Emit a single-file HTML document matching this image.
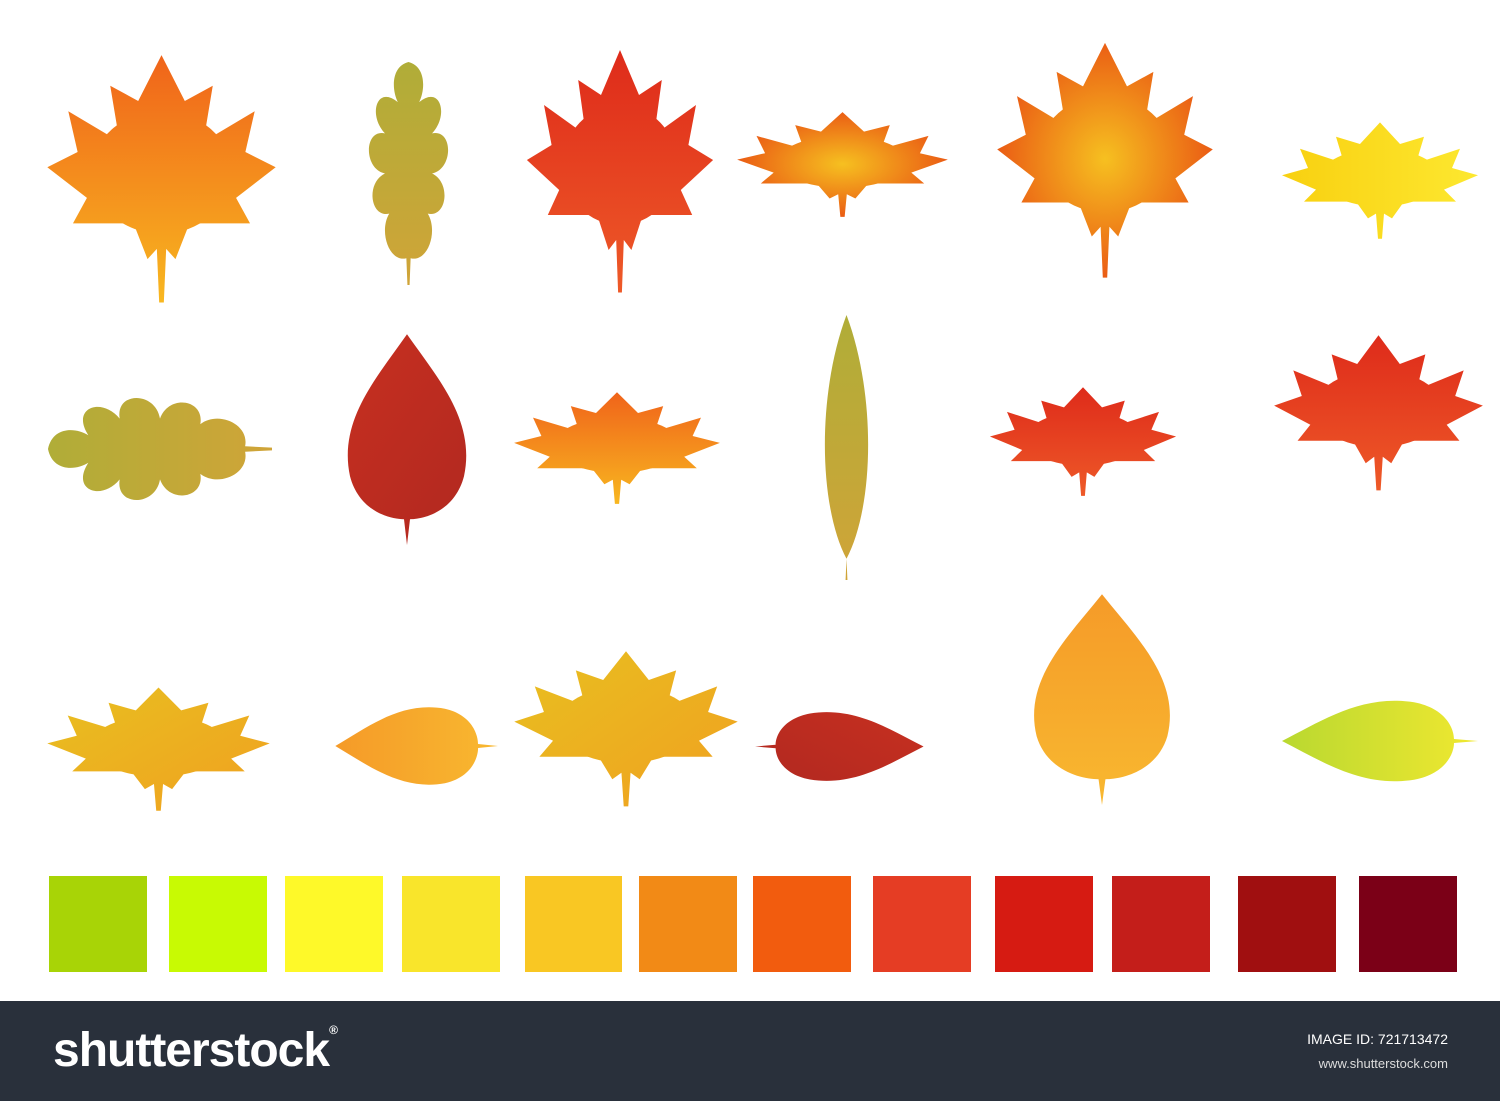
<!DOCTYPE html>
<html><head><meta charset="utf-8"><style>
html,body{margin:0;padding:0;background:#fff;width:1500px;height:1101px;overflow:hidden;position:relative;font-family:"Liberation Sans",sans-serif}
.sw{position:absolute;top:876px;height:96px}
#foot{position:absolute;left:0;top:1001px;width:1500px;height:100px;background:#29303b;color:#fff}
</style></head><body>
<svg width="1500" height="1000" style="position:absolute;left:0;top:0">
<defs>
<g id="maple"><path d="M50,2 L60,20 L72,14 L68,36 L90,24 L86,40 L99,46 L82,58 L88,68 L62,68 L56,82 L52,78 L51,99 L49,99 L48,78 L44,82 L38,68 L12,68 L18,58 L1,46 L14,40 L10,24 L32,36 L28,14 L40,20 Z"/><ellipse cx="50" cy="48" rx="30" ry="24"/></g>
<path id="oak" d="M50,0 C66,2 66,12 60,18 C80,10 88,24 72,32 C92,30 92,48 72,50 C90,54 86,70 68,68 C78,76 68,90 52,88 L51,100 L49,100 L48,88 C32,90 22,76 32,68 C14,70 10,54 28,50 C8,48 8,30 28,32 C12,24 20,10 40,18 C34,12 34,2 50,0Z"/>
<path id="oval" d="M50,0 C82,30 80,72 50,92 L51,100 L49,100 L50,92 C20,72 18,30 50,0Z"/>
<path id="heart" d="M50,2 C70,22 96,42 88,68 C82,84 62,88 52,88 L50,100 L48,88 C38,88 18,84 12,68 C4,42 30,22 50,2Z"/>
<linearGradient id="gO" gradientUnits="userSpaceOnUse" x1="0" y1="0" x2="0" y2="100"><stop offset="0" stop-color="#f0621a"/><stop offset="1" stop-color="#f8b820"/></linearGradient>
<radialGradient id="gO2" gradientUnits="userSpaceOnUse" cx="50" cy="50" r="50"><stop offset="0" stop-color="#f6c020"/><stop offset="1" stop-color="#ea5a14"/></radialGradient>
<linearGradient id="gR" gradientUnits="userSpaceOnUse" x1="0" y1="0" x2="0" y2="100"><stop offset="0" stop-color="#de2a1a"/><stop offset="1" stop-color="#ee5a28"/></linearGradient>
<linearGradient id="gY" gradientUnits="userSpaceOnUse" x1="0" y1="0" x2="100" y2="0"><stop offset="0" stop-color="#f8d010"/><stop offset="1" stop-color="#fde830"/></linearGradient>
<linearGradient id="gOl" gradientUnits="userSpaceOnUse" x1="0" y1="0" x2="0" y2="100"><stop offset="0" stop-color="#b0ad38"/><stop offset="1" stop-color="#d0a438"/></linearGradient>
<linearGradient id="gB" gradientUnits="userSpaceOnUse" x1="0" y1="0" x2="100" y2="100"><stop offset="0" stop-color="#c83020"/><stop offset="1" stop-color="#b02820"/></linearGradient>
<linearGradient id="gYO" gradientUnits="userSpaceOnUse" x1="0" y1="0" x2="100" y2="100"><stop offset="0" stop-color="#e8c020"/><stop offset="1" stop-color="#f0a020"/></linearGradient>
<linearGradient id="gGY" gradientUnits="userSpaceOnUse" x1="0" y1="0" x2="0" y2="100"><stop offset="0" stop-color="#b8d830"/><stop offset="1" stop-color="#f0e830"/></linearGradient>
<linearGradient id="gHO" gradientUnits="userSpaceOnUse" x1="0" y1="0" x2="0" y2="100"><stop offset="0" stop-color="#f59a28"/><stop offset="1" stop-color="#f8b830"/></linearGradient>
</defs>
<svg x="45" y="50" width="233" height="255" viewBox="0 0 100 100" preserveAspectRatio="none"><use href="#maple" fill="url(#gO)"/></svg>
<svg x="355" y="62" width="107" height="223" viewBox="0 0 100 100" preserveAspectRatio="none"><use href="#oak" fill="url(#gOl)"/></svg>
<svg x="525" y="45" width="190" height="250" viewBox="0 0 100 100" preserveAspectRatio="none"><use href="#maple" fill="url(#gR)"/></svg>
<svg x="735" y="110" width="215" height="108" viewBox="0 0 100 100" preserveAspectRatio="none"><use href="#maple" fill="url(#gO2)"/></svg>
<svg x="995" y="38" width="220" height="242" viewBox="0 0 100 100" preserveAspectRatio="none"><use href="#maple" fill="url(#gO2)"/></svg>
<svg x="1280" y="120" width="200" height="120" viewBox="0 0 100 100" preserveAspectRatio="none"><use href="#maple" fill="url(#gY)"/></svg>
<svg x="48" y="380" width="224" height="138" viewBox="0 0 100 100" preserveAspectRatio="none"><g transform="rotate(-90 50 50)"><use href="#oak" fill="url(#gOl)"/></g></svg>
<svg x="332" y="330" width="150" height="215" viewBox="0 0 100 100" preserveAspectRatio="none"><use href="#heart" fill="url(#gB)"/></svg>
<svg x="512" y="390" width="210" height="115" viewBox="0 0 100 100" preserveAspectRatio="none"><use href="#maple" fill="url(#gO)"/></svg>
<svg x="800" y="315" width="93" height="265" viewBox="0 0 100 100" preserveAspectRatio="none"><use href="#oval" fill="url(#gOl)"/></svg>
<svg x="988" y="385" width="190" height="112" viewBox="0 0 100 100" preserveAspectRatio="none"><use href="#maple" fill="url(#gR)"/></svg>
<svg x="1272" y="332" width="213" height="160" viewBox="0 0 100 100" preserveAspectRatio="none"><use href="#maple" fill="url(#gR)"/></svg>
<svg x="45" y="685" width="227" height="127" viewBox="0 0 100 100" preserveAspectRatio="none"><use href="#maple" fill="url(#gYO)"/></svg>
<svg x="332" y="697" width="166" height="98" viewBox="0 0 100 100" preserveAspectRatio="none"><g transform="rotate(-90 50 50)"><use href="#heart" fill="url(#gHO)"/></g></svg>
<svg x="512" y="648" width="228" height="160" viewBox="0 0 100 100" preserveAspectRatio="none"><use href="#maple" fill="url(#gYO)"/></svg>
<svg x="755" y="703" width="172" height="87" viewBox="0 0 100 100" preserveAspectRatio="none"><g transform="rotate(90 50 50)"><use href="#heart" fill="url(#gB)"/></g></svg>
<svg x="1016" y="590" width="172" height="215" viewBox="0 0 100 100" preserveAspectRatio="none"><use href="#heart" fill="url(#gHO)"/></svg>
<svg x="1278" y="690" width="200" height="102" viewBox="0 0 100 100" preserveAspectRatio="none"><g transform="rotate(-90 50 50)"><use href="#heart" fill="url(#gGY)"/></g></svg>
</svg>
<div class="sw" style="left:49px;width:98px;background:#a8d406"></div>
<div class="sw" style="left:169px;width:98px;background:#c8fa03"></div>
<div class="sw" style="left:285px;width:98px;background:#fef929"></div>
<div class="sw" style="left:402px;width:98px;background:#f9e52b"></div>
<div class="sw" style="left:525px;width:97px;background:#f9c723"></div>
<div class="sw" style="left:639px;width:98px;background:#f28a16"></div>
<div class="sw" style="left:753px;width:98px;background:#f25c0e"></div>
<div class="sw" style="left:873px;width:98px;background:#e53d24"></div>
<div class="sw" style="left:995px;width:98px;background:#d61b12"></div>
<div class="sw" style="left:1112px;width:98px;background:#c41e1a"></div>
<div class="sw" style="left:1238px;width:98px;background:#a00f10"></div>
<div class="sw" style="left:1359px;width:98px;background:#7b0017"></div>
<div id="foot">
<div style="position:absolute;left:53px;top:22px;font-size:48px;font-weight:bold;letter-spacing:-1px">shutterstock<span style="font-size:12px;vertical-align:top">®</span></div>
<div style="position:absolute;right:52px;top:30px;font-size:14px">IMAGE ID: 721713472</div>
<div style="position:absolute;right:52px;top:55px;font-size:13px;color:#ddd">www.shutterstock.com</div>
</div>
</body></html>
